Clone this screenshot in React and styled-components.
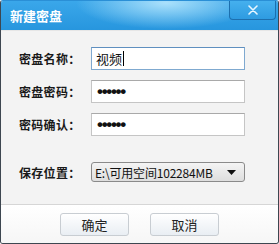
import React from "react";
import styled, { createGlobalStyle } from "styled-components";

const GlobalStyle = createGlobalStyle`
  html, body {
    margin: 0;
    padding: 0;
    background: #ffffff;
  }
  body {
    font-family: "Noto Sans CJK SC", "Liberation Sans", sans-serif;
  }
`;

const fields = [
  { label: "密盘名称：", value: "视频", focused: true },
  { label: "密盘密码：", value: "••••••", secret: true },
  { label: "密码确认：", value: "••••••", secret: true },
];

const App = () => {
  return (
    <>
      <GlobalStyle />
      <Window>
        <TitleBar>
          <Title>新建密盘</Title>
          <CloseButton>
            <svg width="10" height="10" viewBox="0 0 10 10">
              <path
                d="M1 1 L9 9 M9 1 L1 9"
                stroke="#e8f6ff"
                strokeWidth="1.6"
                strokeLinecap="round"
              />
            </svg>
          </CloseButton>
        </TitleBar>
        <Body>
          <Fields>
            {fields.map((f) => (
              <Row key={f.label}>
                <Label>{f.label}</Label>
                <Input focused={f.focused} secret={f.secret}>
                  {f.value}
                  {f.focused && <Caret />}
                </Input>
              </Row>
            ))}
          </Fields>
          <Row>
            <Label>保存位置：</Label>
            <Select>
              <span>E:\可用空间102284MB</span>
              <svg width="9" height="5" viewBox="0 0 9 5">
                <path d="M0 0 L9 0 L4.5 5 Z" fill="#111" />
              </svg>
            </Select>
          </Row>
        </Body>
        <Footer>
          <Button>确定</Button>
          <Button>取消</Button>
        </Footer>
      </Window>
    </>
  );
};

export default App;

const Window = styled.div`
  width: 279px;
  height: 244px;
  box-sizing: border-box;
  display: flex;
  flex-direction: column;
  border: 1px solid #3d4650;
  border-top-color: #2a8fd6;
  border-radius: 3px;
  overflow: hidden;
  background: #f3f3f3;
`;

const TitleBar = styled.div`
  height: 29px;
  flex-shrink: 0;
  display: flex;
  align-items: flex-start;
  justify-content: space-between;
  background: radial-gradient(
      ellipse 90px 26px at 165px 2px,
      rgba(190, 235, 255, 0.85),
      rgba(190, 235, 255, 0) 100%
    ),
    linear-gradient(to bottom, #3aa7ea, #2796de);
`;

const Title = styled.div`
  padding: 6px 0 0 9px;
  color: #ffffff;
  font-size: 13px;
  font-weight: 700;
  line-height: 18px;
`;

const CloseButton = styled.div`
  width: 47px;
  height: 19px;
  margin-right: 2px;
  box-sizing: border-box;
  display: flex;
  align-items: center;
  justify-content: center;
  border: 1px solid #1d6fae;
  border-top: none;
  border-radius: 0 0 4px 4px;
  background: linear-gradient(to bottom, #45b0ee, #2e9be1);
`;

const Body = styled.div`
  flex: 1;
  display: flex;
  flex-direction: column;
  gap: 26px;
  padding: 16px 0 0 18px;
  border-top: 1px solid #e6e6e6;
`;

const Fields = styled.div`
  display: flex;
  flex-direction: column;
  gap: 10px;
`;

const Row = styled.div`
  display: flex;
  align-items: center;
`;

const Label = styled.div`
  width: 72px;
  font-size: 12px;
  font-weight: 700;
  color: #1a1a1a;
  letter-spacing: 0.3px;
`;

const Input = styled.div`
  width: 154px;
  height: 23px;
  box-sizing: border-box;
  display: flex;
  align-items: center;
  padding-left: ${({ secret }) => (secret ? "5px" : "4px")};
  background: #ffffff;
  border: 1px solid ${({ focused }) => (focused ? "#7fa9d0" : "#c5c5c5")};
  border-top-color: ${({ focused }) => (focused ? "#5f8fbf" : "#a9a9a9")};
  font-family: ${({ secret }) =>
    secret
      ? '"Liberation Sans", sans-serif'
      : '"Noto Sans CJK SC", "Liberation Sans", sans-serif'};
  font-size: ${({ secret }) => (secret ? "17px" : "13px")};
  letter-spacing: ${({ secret }) => (secret ? "-1.3px" : "0")};
  font-weight: ${({ secret }) => (secret ? 700 : 400)};
  color: #111;
`;

const Caret = styled.span`
  width: 1px;
  height: 15px;
  margin-left: 1px;
  background: #000;
`;

const Select = styled.div`
  width: 154px;
  height: 20px;
  box-sizing: border-box;
  display: flex;
  align-items: center;
  justify-content: space-between;
  padding: 0 8px 0 3px;
  border: 1px solid #8a8a8a;
  border-radius: 3px;
  background: linear-gradient(to bottom, #f4f4f4, #dedede);
  font-size: 12px;
  color: #111;
  letter-spacing: -0.2px;
`;

const Footer = styled.div`
  height: 38px;
  flex-shrink: 0;
  display: flex;
  align-items: center;
  justify-content: center;
  gap: 21px;
  border-top: 1px solid #d6d6d6;
  background: linear-gradient(to bottom, #ffffff, #f6f6f6);
`;

const Button = styled.div`
  width: 69px;
  height: 23px;
  box-sizing: border-box;
  display: flex;
  align-items: center;
  justify-content: center;
  border: 1px solid #c8cdd2;
  border-radius: 3px;
  background: linear-gradient(to bottom, #ffffff, #e9eef3);
  font-size: 13px;
  color: #222;
`;
